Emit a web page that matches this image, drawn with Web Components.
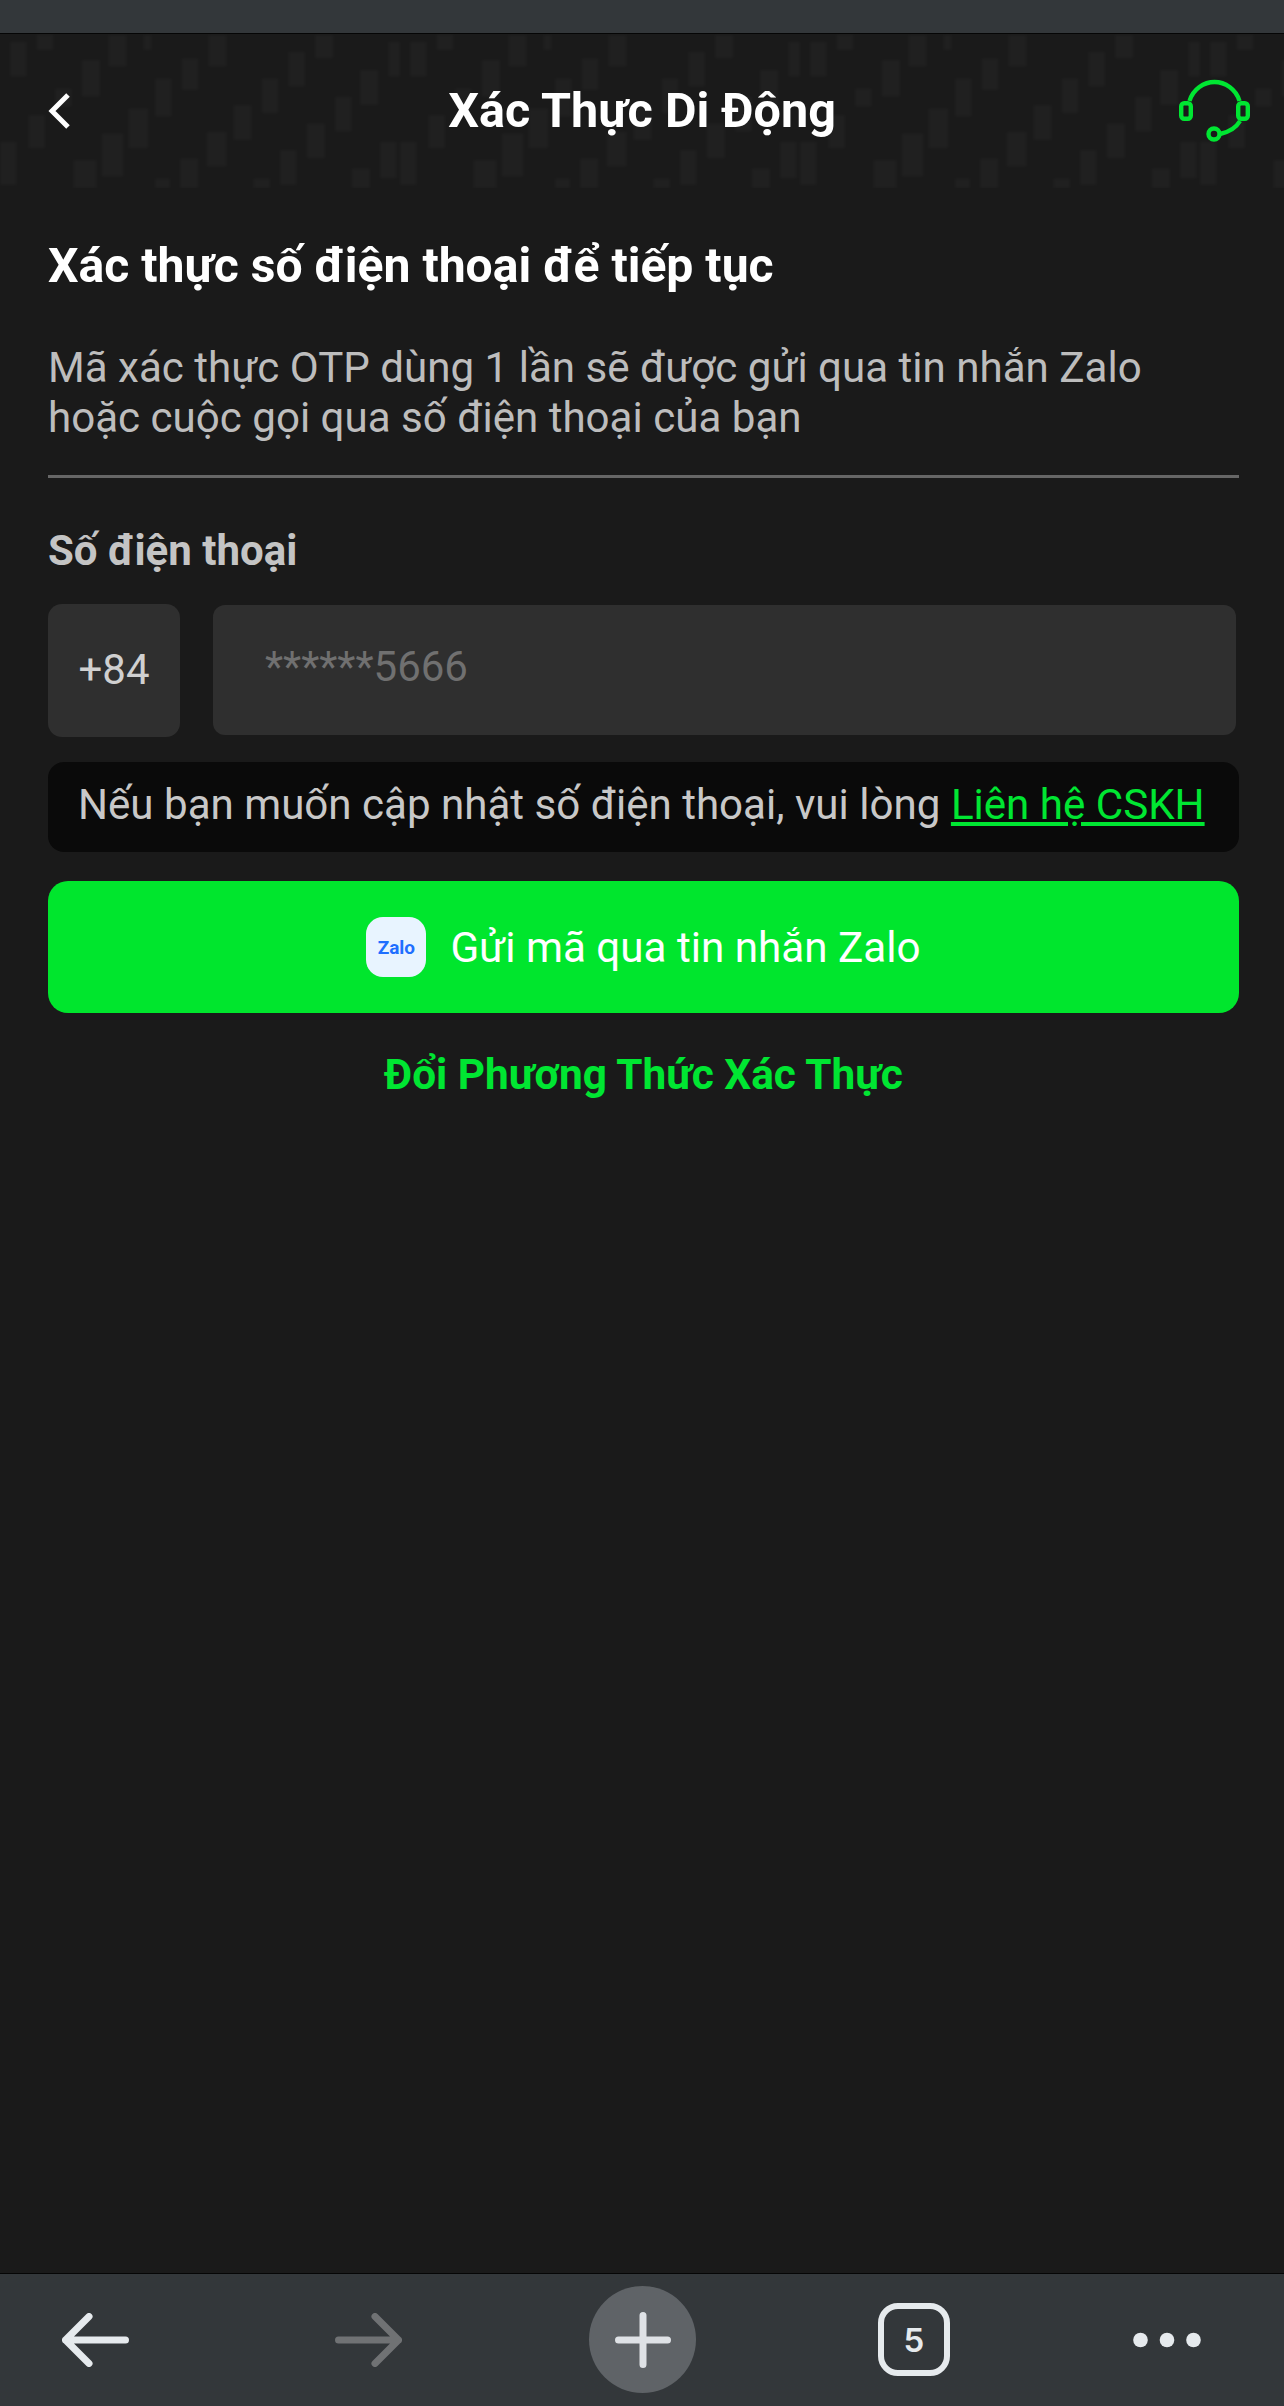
<!DOCTYPE html>
<html lang="vi"><head><meta charset="utf-8"><title>Xác Thực Di Động</title>
<style>
html,body{margin:0;padding:0;background:#1a1a1a;font-family:Roboto,"Noto Sans",sans-serif}
body{width:1284px;height:2406px;overflow:hidden}
</style></head><body>
<app-shell>
  <browser-top></browser-top>
  <page-header title-text="Xác Thực Di Động"></page-header>
  <otp-form></otp-form>
  <browser-bar></browser-bar>
</app-shell>
<script>
function def(name, css, html, init){
  customElements.define(name, class extends HTMLElement{
    constructor(){super();const r=this.attachShadow({mode:'open'});r.innerHTML='<style>'+css+'</style>'+html;if(init)init(r,this);}
  });
}
def('app-shell',':host{display:flex;flex-direction:column;width:1284px;height:2406px}','<slot></slot>');
def('browser-top',':host{display:block;flex:none;height:33px;background:#33373a;border-bottom:1px solid #050505}','');
def('page-header',`
:host{display:block;flex:none;position:relative;height:154px;background:#1a1a1a;overflow:hidden}
svg.bg{position:absolute;left:0;top:0}
.row{position:relative;display:grid;grid-template-columns:1fr auto 1fr;align-items:center;height:154px;padding:0 34px}
.t{font-weight:700;font-size:48.5px;color:#fff;line-height:60px;white-space:nowrap}
.r{justify-self:end}
.b{margin-left:14px}
svg{display:block}
`,`<svg class="bg" width="1284" height="154"><g fill="#fff" fill-opacity=".028" style="filter:blur(1.6px)"></g></svg>
<div class="row">
<svg class="b" width="23" height="38" viewBox="0 0 23 38" fill="none"><path d="M20 3 4 19 20 35" stroke="#fff" stroke-width="5"/></svg>
<div class="t"></div>
<svg class="r" width="71" height="66" viewBox="0 0 71 66" fill="none" stroke="#00e632" stroke-width="4.4">
<rect x="2.200" y="25.200" width="9.600" height="15.600" rx="3"/><rect x="59.200" y="25.200" width="9.600" height="15.600" rx="3"/>
<path d="M10.500 23C14 11 25 4 35.500 4S57 11 60.500 23"/><path d="M61 43C57 50 50 54 41 56"/><circle cx="35" cy="56" r="5.500"/></svg>
</div>`,(r,h)=>{
  r.querySelector('.t').textContent=h.getAttribute('title-text');
  const b=[[110,13,50,47],[325,15,55,95],[430,15,25,45],[625,15,55,95],[945,15,55,70],[1165,35,35,105],[30,35,50,105],[245,90,55,110],[545,85,50,95],[865,65,50,105],[1080,120,55,105],[465,145,50,115],[785,145,50,105],[1005,200,50,105],[165,175,50,55],[385,235,60,120],[700,225,55,105],[920,280,55,105],[85,255,50,100],[305,310,65,130],[620,305,60,105],[1140,335,50,110],[0,335,50,130],[220,390,70,85],[540,385,55,90],[840,360,50,105],[1055,415,55,60],[760,445,50,30],[465,445,45,30]];
  let o='';
  for(let k=0;k<4;k++)for(const [x,y,w,hh] of b){
    o+=`<rect x="${(x/3+k*400).toFixed(1)}" y="${(y/3-4).toFixed(1)}" width="${(w/3).toFixed(1)}" height="${(hh/3).toFixed(1)}"/>`;
  }
  r.querySelector('.bg g').innerHTML=o;
});
def('otp-form',`
:host{display:block;flex:1;background:#1a1a1a;padding:0 45px 0 48px;color:#c8c8c8}
h1{margin:0;padding-top:47px;font-size:48.1px;line-height:62px;font-weight:700;color:#fff;white-space:nowrap}
p{margin:0;padding-top:46px;font-size:42.1px;line-height:50px;color:#bdbdbd;white-space:nowrap}
hr{border:0;height:3px;background:#666;margin:32px 0 0}
label{display:block;margin-top:47px;font-size:42px;line-height:52px;font-weight:700;color:#c4c4c4}
.phone{display:flex;gap:33px;margin-top:27px;align-items:flex-start}
.cc{width:132px;height:131px;padding-bottom:2px;border-radius:14px;background:#2f2f2f;display:flex;align-items:center;justify-content:center;font-size:42px;color:#d0d0d0}
.inp{flex:1;height:122px;margin:1px 3.500px 0 0;padding-bottom:8px;border-radius:12px;background:#2f2f2f;display:flex;align-items:center;padding-left:52px;font-size:42px;color:#707070}
.note{display:flex;align-items:center;height:84px;padding-bottom:6px;margin-top:25px;padding-left:30px;border-radius:16px;background:#0a0a0a;font-size:42.1px;color:#c8c8c8;white-space:nowrap}
a{color:#00e632;text-decoration:underline;margin-left:.25em}
.btn{display:flex;align-items:center;justify-content:center;gap:24px;height:132px;margin-top:29px;border-radius:20px;background:#00e62d;color:#fff;font-size:42.2px}
.z{width:60px;height:60px;border-radius:17px;background:#e8f4ff;color:#1f6fff;font-weight:700;font-size:19px;display:flex;align-items:center;justify-content:center}
.alt{text-align:center;margin-top:35px;font-size:42.3px;line-height:54px;font-weight:700;color:#00e632}
`,`<h1>Xác thực số điện thoại để tiếp tục</h1>
<p>Mã xác thực OTP dùng 1 lần sẽ được gửi qua tin nhắn Zalo<br>hoặc cuộc gọi qua số điện thoại của bạn</p>
<hr>
<label>Số điện thoại</label>
<div class="phone"><div class="cc">+84</div><div class="inp">******5666</div></div>
<div class="note">Nếu bạn muốn cập nhật số điện thoại, vui lòng<a>Liên hệ CSKH</a></div>
<div class="btn"><span class="z">Zalo</span><span>Gửi mã qua tin nhắn Zalo</span></div>
<div class="alt">Đổi Phương Thức Xác Thực</div>`);
def('browser-bar',`
:host{display:flex;flex:none;align-items:center;height:131px;padding-bottom:1px;background:#33373a;border-top:1px solid #050505;padding-left:62px;box-sizing:content-box}
svg{display:block;flex:none}
.c{margin-left:187px;width:107px;height:107px;border-radius:50%;background:#5f6367;display:flex;align-items:center;justify-content:center;flex:none}
.tab{margin-left:182px;width:60px;height:61px;border:6px solid #e6eaed;border-radius:20px;display:flex;align-items:center;justify-content:center;color:#e6eaed;font:600 33px Inter,Roboto,sans-serif;flex:none}
`,`<svg width="67" height="54" viewBox="0 0 67 54" fill="none" stroke="#e6eaed" stroke-width="7" stroke-linecap="round" stroke-linejoin="round"><path d="M27 3.500 3.500 27 27 50.500M3.500 27H63.500"/></svg>
<svg style="margin-left:206px" width="67" height="54" viewBox="0 0 67 54" fill="none" stroke="#707274" stroke-width="7" stroke-linecap="round" stroke-linejoin="round"><path d="M40 3.500 63.500 27 40 50.500M3.500 27H63.500"/></svg>
<div class="c"><svg width="56" height="56" viewBox="0 0 56 56" stroke="#dfe2e6" stroke-width="7" stroke-linecap="round"><path d="M28 3.500V52.500M3.500 28H52.500"/></svg></div>
<div class="tab">5</div>
<svg style="margin-left:183px" width="68" height="16" viewBox="0 0 68 16" fill="#e6eaed"><circle cx="7.500" cy="8" r="7.300"/><circle cx="34" cy="8" r="7.300"/><circle cx="60.500" cy="8" r="7.300"/></svg>`);
</script>
</body></html>
